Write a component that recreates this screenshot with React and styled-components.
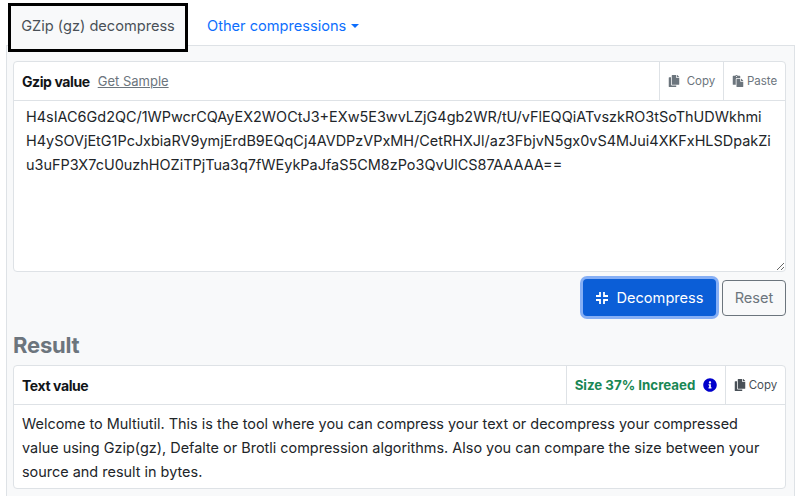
import styled, { createGlobalStyle } from 'styled-components';
import { FaCopy, FaPaste, FaInfoCircle } from 'react-icons/fa';

const GlobalStyle = createGlobalStyle`
  html, body {
    margin: 0;
    padding: 0;
    height: 496px;
    overflow: hidden;
    background: #ffffff;
    font-family: Inter, "Liberation Sans", sans-serif;
    color: #212529;
  }
`;

const Page = styled.div`
  width: 800px;
  height: 496px;
  overflow: hidden;
  padding: 3px 5px 0 6px;
  box-sizing: border-box;
`;

const Tabs = styled.div`
  display: flex;
  align-items: flex-start;
  height: 42px;
  padding-left: 2px;
  position: relative;
  z-index: 1;
`;

const ActiveTab = styled.div`
  width: 180px;
  height: 49px;
  box-sizing: border-box;
  border: 3px solid #000000;
  padding-bottom: 3px;
  background: #f8f9fa;
  color: #495057;
  font-size: 14.6px;
  display: flex;
  align-items: center;
  justify-content: center;
`;

const TabLink = styled.div`
  color: #0d6efd;
  font-size: 14.6px;
  display: flex;
  align-items: center;
  gap: 5px;
  height: 46px;
  padding-left: 19px;
`;

const Caret = styled.span`
  width: 0;
  height: 0;
  border-left: 4px solid transparent;
  border-right: 4px solid transparent;
  border-top: 4px solid #0d6efd;
`;

const Panel = styled.div`
  background: #f8f9fa;
  border: 1px solid #dee2e6;
  padding: 15px 8px 0 6px;
  height: 460px;
  box-sizing: border-box;
`;

const Card = styled.div`
  background: #ffffff;
  border: 1px solid #dee2e6;
  border-radius: 4px;
`;

const CardHeader = styled.div`
  display: flex;
  align-items: stretch;
  height: 38px;
  border-bottom: 1px solid #dee2e6;
`;

const Title = styled.div`
  flex: 1;
  display: flex;
  align-items: center;
  gap: 8px;
  padding-left: 8px;
  font-size: 14px;
  font-weight: 700;
  letter-spacing: -0.4px;
  color: #111417;
`;

const SampleLink = styled.span`
  font-size: 13px;
  font-weight: 400;
  letter-spacing: 0;
  color: #6c757d;
  text-decoration: underline;
`;

const HeaderCell = styled.div`
  width: ${props => props.width}px;
  box-sizing: border-box;
  border-left: 1px solid #dee2e6;
  display: flex;
  align-items: center;
  justify-content: center;
  gap: ${props => props.gap || 5}px;
  font-size: 11.5px;
  color: ${props => props.color || '#6c757d'};
  svg {
    font-size: 12px;
  }
`;

const ValueBox = styled.textarea`
  display: block;
  width: 100%;
  height: 170px;
  box-sizing: border-box;
  border: none;
  outline: none;
  padding: 4px 12px;
  background: transparent;
  font-family: Inter, "Liberation Sans", sans-serif;
  font-size: 14.45px;
  line-height: 24px;
  color: #212529;
  white-space: pre;
  overflow: hidden;
  border-radius: 0 0 4px 4px;
`;

const Actions = styled.div`
  display: flex;
  justify-content: flex-end;
  align-items: center;
  gap: 6px;
  margin-top: 7px;
`;

const PrimaryButton = styled.button`
  width: 133px;
  height: 37px;
  border: none;
  border-radius: 4px;
  background: #0b5ed7;
  box-shadow: 0 0 0 3px #86aff5;
  color: #ffffff;
  font-family: inherit;
  font-size: 14.6px;
  display: flex;
  align-items: center;
  justify-content: center;
  gap: 7px;
`;

const OutlineButton = styled.button`
  width: 64px;
  height: 36px;
  border: 1px solid #6c757d;
  border-radius: 4px;
  background: transparent;
  color: #6c757d;
  font-family: inherit;
  font-size: 14.6px;
`;

const ResultHeading = styled.h2`
  margin: 14px 0 5px;
  font-size: 22px;
  line-height: 30px;
  font-weight: 700;
  color: #6c757d;
  letter-spacing: -0.2px;
`;

const SizeNote = styled.span`
  font-size: 13.3px;
  font-weight: 700;
  color: #198754;
`;

const InfoIcon = styled(FaInfoCircle)`
  color: #0000cc;
  font-size: 14px !important;
`;

const ResultBody = styled.div`
  padding: 7px 8px 4px;
  font-size: 14.45px;
  line-height: 24px;
  white-space: pre;
  color: #212529;
`;

const sample = `H4sIAC6Gd2QC/1WPwcrCQAyEX2WOCtJ3+EXw5E3wvLZjG4gb2WR/tU/vFlEQQiATvszkRO3tSoThUDWkhmi
H4ySOVjEtG1PcJxbiaRV9ymjErdB9EQqCj4AVDPzVPxMH/CetRHXJl/az3FbjvN5gx0vS4MJui4XKFxHLSDpakZi
u3uFP3X7cU0uzhHOZiTPjTua3q7fWEykPaJfaS5CM8zPo3QvUlCS87AAAAA==`;

const resultText = `Welcome to Multiutil. This is the tool where you can compress your text or decompress your compressed
value using Gzip(gz), Defalte or Brotli compression algorithms. Also you can compare the size between your
source and result in bytes.`;

const CompressIcon = () => (
  <svg width="14" height="14" viewBox="0 0 14 14" fill="none" stroke="#ffffff" strokeWidth="1.8">
    <path d="M5 1v4H1M9 1v4h4M5 13V9H1M9 13V9h4" />
  </svg>
);

export default function App() {
  return (
    <Page>
      <GlobalStyle />
      <Tabs>
        <ActiveTab>GZip (gz) decompress</ActiveTab>
        <TabLink>
          Other compressions
          <Caret />
        </TabLink>
      </Tabs>
      <Panel>
        <Card>
          <CardHeader>
            <Title>
              Gzip value
              <SampleLink>Get Sample</SampleLink>
            </Title>
            <HeaderCell width={64} gap={7}>
              <FaCopy />
              Copy
            </HeaderCell>
            <HeaderCell width={62} gap={3}>
              <FaPaste />
              Paste
            </HeaderCell>
          </CardHeader>
          <ValueBox readOnly defaultValue={sample} />
        </Card>
        <Actions>
          <PrimaryButton>
            <CompressIcon />
            Decompress
          </PrimaryButton>
          <OutlineButton>Reset</OutlineButton>
        </Actions>
        <ResultHeading>Result</ResultHeading>
        <Card>
          <CardHeader>
            <Title>Text value</Title>
            <HeaderCell width={159} gap={8}>
              <SizeNote>Size 37% Increaed</SizeNote>
              <InfoIcon />
            </HeaderCell>
            <HeaderCell width={60} gap={3} color="#495057">
              <FaCopy />
              Copy
            </HeaderCell>
          </CardHeader>
          <ResultBody>{resultText}</ResultBody>
        </Card>
      </Panel>
    </Page>
  );
}
